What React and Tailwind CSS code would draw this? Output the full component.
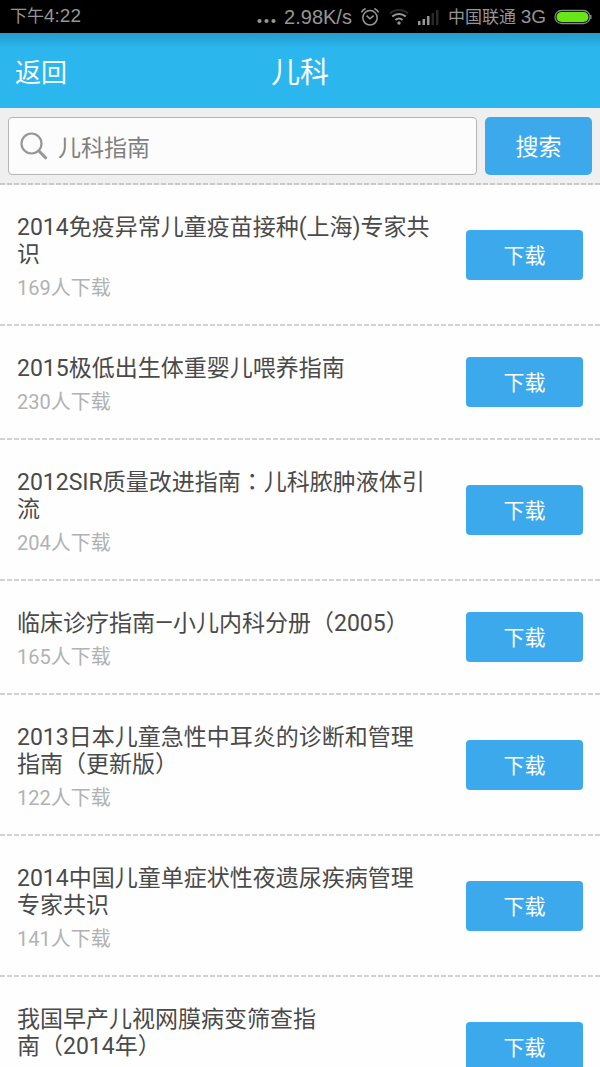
import React from "react";

const guides = [
  { title: ["2014免疫异常儿童疫苗接种(上海)专家共识"], count: 169 },
  { title: ["2015极低出生体重婴儿喂养指南"], count: 230 },
  { title: ["2012SIR质量改进指南：儿科脓肿液体引流"], count: 204 },
  { title: ["临床诊疗指南—小儿内科分册（2005）"], count: 165 },
  { title: ["2013日本儿童急性中耳炎的诊断和管理", "指南（更新版）"], count: 122 },
  { title: ["2014中国儿童单症状性夜遗尿疾病管理专家共识"], count: 141 },
  { title: ["我国早产儿视网膜病变筛查指", "南（2014年）"], count: null },
];

// The TC face centres the full-width colon in its cell.
function Punctuated({ text }) {
  return text.split(/(：)/).map((part, i) =>
    part === "：" ? (
      <span key={i} className="font-['Noto_Sans_CJK_TC',sans-serif] leading-none">
        {part}
      </span>
    ) : (
      part
    )
  );
}

function StatusBar() {
  return (
    <div className="flex h-[33px] items-center justify-between bg-black pl-[10px] pr-2 font-['Liberation_Sans','Noto_Sans_CJK_SC',sans-serif] text-[#969696]">
      <span className="text-[19px] leading-6">
        <span className="text-[17px]">下午</span>4:22
      </span>
      <div className="flex items-center">
        <svg className="mr-2 mt-2 h-1.5 w-[19px]" viewBox="0 0 19 6" fill="currentColor" aria-hidden="true">
          <circle cx="2.5" cy="3" r="2.1" />
          <circle cx="9.5" cy="3" r="2.1" />
          <circle cx="16.5" cy="3" r="2.1" />
        </svg>
        <span className="text-[20px] leading-6">2.98K/s</span>
        <svg className="ml-2 size-5" viewBox="0 0 20 20" fill="none" stroke="currentColor" strokeWidth="1.5" aria-hidden="true">
          <circle cx="10" cy="10.8" r="7.2" />
          <path d="M1.4 5.4A10 10 0 0 1 5.6 1.5M14.4 1.5a10 10 0 0 1 4.2 3.9M6.6 8.6l3.4 3.2 3.6-3.2" />
        </svg>
        <svg className="ml-2 h-5 w-[22px]" viewBox="0 0 22 20" fill="none" stroke="currentColor" strokeWidth="2" aria-hidden="true">
          <path d="M2 6.4C7 1.8 15 1.8 20 6.4" stroke="#292929" />
          <path d="M4.2 9.6c4-3.6 9.6-3.6 13.6 0M7.4 13c2.2-1.9 5-1.9 7.2 0" />
          <circle cx="11" cy="16" r="1.7" fill="currentColor" stroke="none" />
        </svg>
        <svg className="ml-2 h-4 w-[21px]" viewBox="0 0 21 16" fill="currentColor" aria-hidden="true">
          <path d="M0 12h2.5v4H0zM4.5 10H7v6H4.5zM9 7h2.5v9H9z" />
          <path d="M13.5 4H16v12h-2.5zM18 1h2.5v15H18z" fill="#292929" />
        </svg>
        <span className="ml-[9px] pt-px text-[17px]">
          中国联通 <span className="text-[19px]">3G</span>
        </span>
        <svg className="ml-2 h-4 w-[38px]" viewBox="0 0 38 16" fill="none" aria-hidden="true">
          <rect x="1" y="1.5" width="35" height="13" rx="6.5" stroke="#858585" strokeWidth="1.3" />
          <path d="M36.8 6v4" stroke="#858585" strokeWidth="1.5" />
          <rect x="2.5" y="3" width="32" height="10" rx="5" fill="#67e718" />
        </svg>
      </div>
    </div>
  );
}

export default function App() {
  return (
    <div className="h-screen overflow-hidden bg-[#fefefe] font-[Roboto,'Noto_Sans_CJK_SC',sans-serif]">
      <StatusBar />
      <header className="grid h-[75px] grid-cols-[1fr_auto_1fr] items-center bg-[#2bb6ee] bg-linear-to-b from-[#249bcc] via-[#2bb6ee] via-20% to-[#2bb6ee] px-[15px] pt-1 text-white">
        <button type="button" className="justify-self-start text-[26px] leading-9">
          返回
        </button>
        <h1 className="text-[29px] leading-10">儿科</h1>
      </header>
      <form
        className="flex gap-2 bg-[#efefef] bg-[repeating-linear-gradient(90deg,#c8c8c8_0_5px,#efefef_5px_7px)] bg-[length:100%_2px] bg-bottom bg-no-repeat px-2 pt-[9px] pb-[10px]"
        onSubmit={(e) => e.preventDefault()}
      >
        <label className="flex h-[58px] min-w-0 flex-1 items-center gap-2.5 rounded-[4px] border border-[#b5b5b5] bg-[#fcfcfc] pl-[11px]">
          <svg className="size-7 shrink-0" viewBox="0 0 28 28" fill="none" stroke="#979797" strokeWidth="2.2" aria-hidden="true">
            <circle cx="11.5" cy="11.5" r="10" />
            <path d="M18.5 18.5l8 8.3" strokeWidth="3" />
          </svg>
          <input
            type="text"
            aria-label="搜索指南"
            placeholder="儿科指南"
            className="h-full min-w-0 flex-1 bg-transparent pt-1 text-[23px] text-[#777] outline-none placeholder:text-[#808080]"
          />
        </label>
        <button type="submit" className="w-[107px] rounded-[5px] bg-[#3ba9ec] pt-1 text-[23px] text-white">
          搜索
        </button>
      </form>
      <ul>
        {guides.map((g) => (
          <li
            key={g.title[0]}
            className="flex items-center gap-8 bg-[repeating-linear-gradient(90deg,#d2d2d2_0_5px,transparent_5px_7px)] bg-[length:100%_2px] bg-bottom bg-no-repeat px-[17px] pb-0.5"
          >
            <div className="min-w-0 flex-1 pt-[29px] pb-6">
              <h2 className="text-[23px] leading-[27px] text-[#4a4a4a]">
                {g.title.map((line, i) => (
                  <React.Fragment key={line}>
                    {i > 0 && <br />}
                    <Punctuated text={line} />
                  </React.Fragment>
                ))}
              </h2>
              <p className="mt-2 h-6 text-xl leading-6 text-[#b2b2b2]">
                {g.count !== null && `${g.count}人下载`}
              </p>
            </div>
            <button type="button" className="h-[50px] w-[117px] rounded-[4px] bg-[#3ba9ec] pt-1 text-[21px] text-white">
              下载
            </button>
          </li>
        ))}
      </ul>
    </div>
  );
}
